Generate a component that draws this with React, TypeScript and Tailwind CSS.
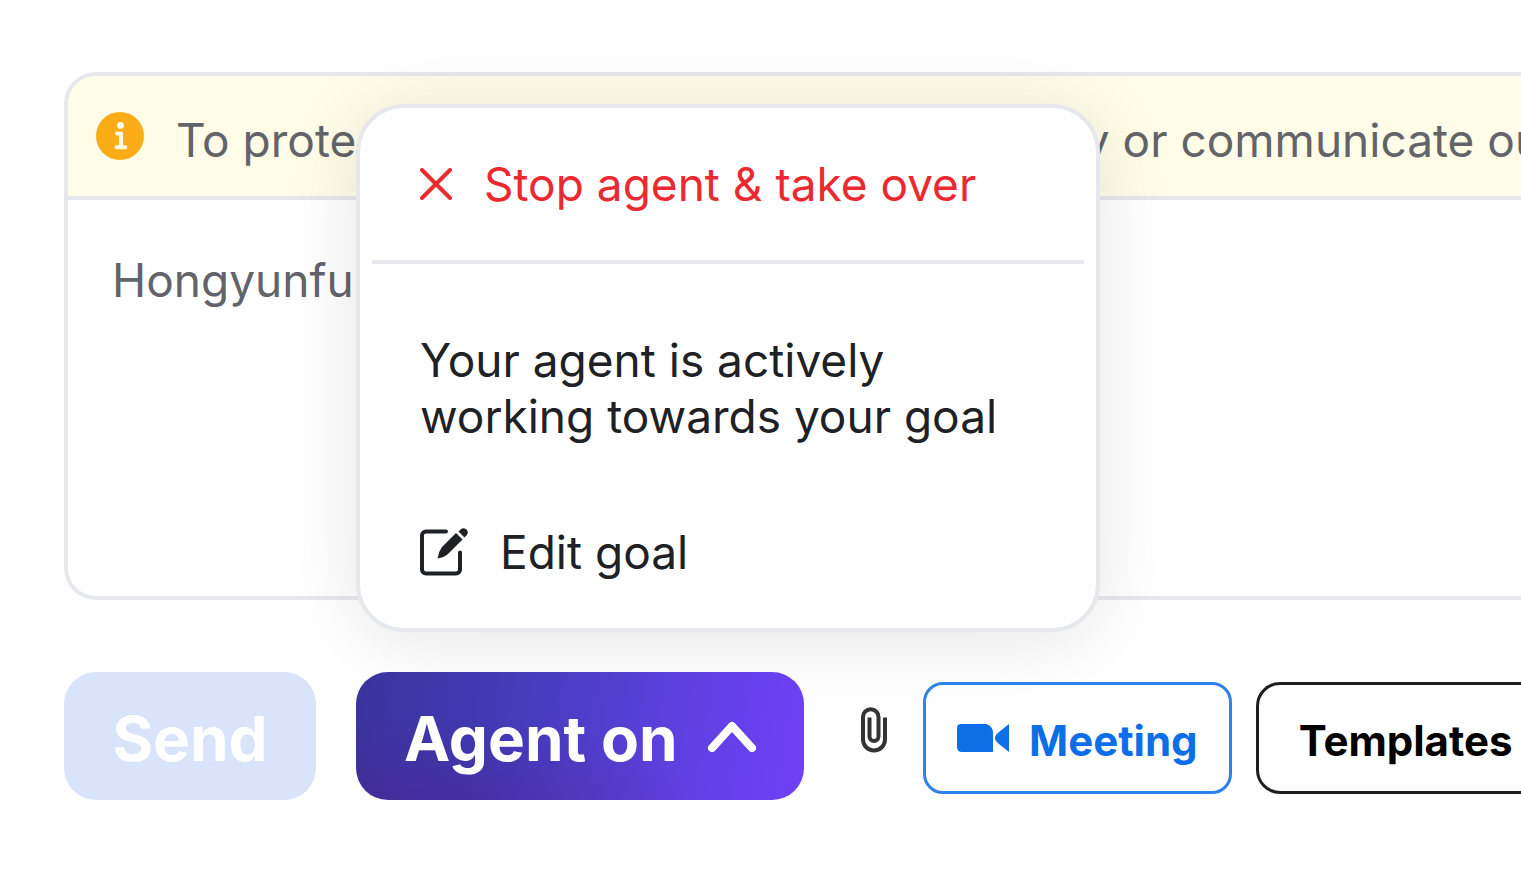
import { useState } from "react";

const InfoIcon: React.FC = () => (
  <svg className="size-12 shrink-0" viewBox="0 0 48 48" fill="none" aria-hidden="true">
    <circle cx="24" cy="24" r="24" fill="#fcac16" />
    <circle cx="24.5" cy="13.4" r="3.4" fill="#fffce8" />
    <path d="M21 21.5h4v13.7M20.5 35.3h8.8" stroke="#fffce8" strokeWidth="4" strokeLinecap="round" strokeLinejoin="round" />
  </svg>
);

const CloseIcon: React.FC = () => (
  <svg className="size-8 shrink-0" viewBox="0 0 32 32" fill="none" aria-hidden="true">
    <path d="M2 2l28 28M30 2L2 30" stroke="currentColor" strokeWidth="4" strokeLinecap="round" />
  </svg>
);

const EditIcon: React.FC = () => (
  <svg className="size-12 shrink-0" viewBox="0 0 48 48" fill="none" aria-hidden="true">
    <path d="M26 3.5H6a4 4 0 0 0-4 4V41.500a4 4 0 0 0 4 4H36a4 4 0 0 0 4-4V24.500" stroke="currentColor" strokeWidth="4" strokeLinecap="round" />
    <path d="M36 5L42.500 11.500L28 26Q24 29.500 17.500 30.500Q18.300 24 22 19Z" fill="currentColor" />
    <path d="M38.500 3.500L41 1.200Q43.500-.8 46.500 1.500Q49 4.500 46.800 7L44.500 9.500Z" fill="currentColor" />
  </svg>
);

const ClipIcon: React.FC = () => (
  <svg className="h-12 w-7" viewBox="0 0 28 48" fill="none" aria-hidden="true">
    <path d="M25 11.500V33.500a11 11 0 0 1-22 0V11a7.700 7.700 0 0 1 15.500 0V30.500a4.500 4.500 0 0 1-9 0V11.500" stroke="#333" strokeWidth="4" />
  </svg>
);

const CameraIcon: React.FC = () => (
  <svg className="h-8 w-13 shrink-0" viewBox="0 0 52 32" fill="currentColor" aria-hidden="true">
    <path d="M4 2H29Q36 4 36 11V30H5Q0 30 0 25V6Q0 2 4 2Z" />
    <path d="M52 2V30L42 22Q38 19 38 16T42 10Z" />
  </svg>
);

const AgentMenu: React.FC = () => (
  <div className="absolute bottom-full left-0 z-10 mb-10 w-[744px] rounded-[48px] border-4 border-[#e7e8ed] bg-white text-[46px] leading-[56px] text-[#202125] shadow-[0_8px_80px_rgba(0,0,0,0.1)]">
    <button type="button" className="flex h-[152px] w-full items-center gap-8 px-15 text-[#eb2931]">
      <CloseIcon />
      Stop agent &amp; take over
    </button>
    <hr className="mx-3 border-t-4 border-[#e7e8ed]" />
    <div className="flex flex-col items-start gap-20 px-15 pt-17 pb-12">
      <p>
        Your agent is actively
        <br />
        working towards your goal
      </p>
      <button type="button" className="flex items-center gap-8">
        <EditIcon />
        Edit goal
      </button>
    </div>
  </div>
);

export default function App() {
  const [message, setMessage] = useState("Hongyunfu");
  const [menuOpen, setMenuOpen] = useState(true);

  return (
    <main className="overflow-hidden pt-18 pb-18 pl-16 font-[Inter,'Liberation_Sans',sans-serif] text-[#636469]">
      <section className="overflow-hidden rounded-l-[32px] border-4 border-r-0 border-[#e7e8ed] text-[46px] leading-[56px]">
        <div className="flex h-31 items-center gap-8 border-b-4 border-[#e7e8ed] bg-[#fffce8] pl-7">
          <InfoIcon />
          <p className="pt-2 whitespace-nowrap">
            To protect your account, please do not pay or communicate outside
          </p>
        </div>
        <textarea
          aria-label="Message"
          className="block h-99 w-full resize-none bg-white px-11 pt-13 outline-none"
          value={message}
          onChange={(e) => setMessage(e.target.value)}
        />
      </section>

      <div className="mt-18 flex items-center gap-10">
        <button type="button" disabled className="relative z-20 h-32 w-63 shrink-0 rounded-[32px] bg-[#d9e4fb] pt-1 text-[62px] font-bold text-white">
          Send
        </button>

        <div className="relative shrink-0">
          {menuOpen && <AgentMenu />}
          <button
            type="button"
            aria-expanded={menuOpen}
            onClick={() => setMenuOpen((prev) => !prev)}
            className="relative z-20 flex h-32 w-112 items-center justify-between rounded-[32px] bg-[radial-gradient(at_20%_110%,rgba(78,32,140,0.5),transparent_50%),linear-gradient(100deg,#3b339b_0%,#403bb5_30%,#5a40da_65%,#6f40f8_100%)] px-12 text-[62px] font-bold text-white"
          >
            <span className="pt-1">Agent on</span>
            <svg className="h-8 w-12" viewBox="0 0 48 32" fill="none" aria-hidden="true">
              <path d="M4 28L24 6L44 28" stroke="currentColor" strokeWidth="8" strokeLinejoin="round" strokeLinecap="round" />
            </svg>
          </button>
        </div>

        <div className="relative z-20 flex shrink-0 items-center gap-6 pt-1 pl-4">
          <button type="button" aria-label="Attach a file" className="pr-[11px] pb-4">
            <ClipIcon />
          </button>
          <button type="button" className="flex h-28 items-center gap-5 rounded-[20px] border-3 border-[#2f82e8] px-[31px] text-[42px] font-bold text-[#0d6fe8]">
            <CameraIcon />
            <span className="pt-1">Meeting</span>
          </button>
          <button type="button" className="h-28 w-75 rounded-[24px] border-3 border-[#1f1f1f] pt-1 pl-10 text-left text-[42px] font-bold text-black">
            Templates
          </button>
        </div>
      </div>
    </main>
  );
}
